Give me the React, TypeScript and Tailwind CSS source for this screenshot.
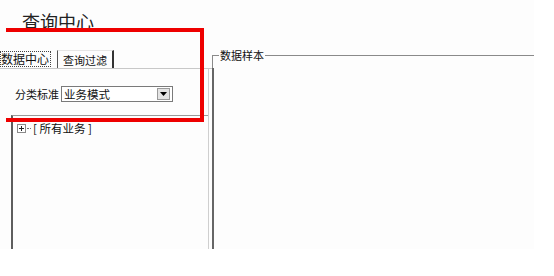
import React from "react";

const font = { fontFamily: '"Noto Sans CJK SC", "Noto Sans", sans-serif' };

function PlusBox() {
  return (
    <svg width="9" height="9" viewBox="0 0 9 9" className="shrink-0">
      <rect x="0.5" y="0.5" width="8" height="8" fill="#fff" stroke="#8a8a8a" />
      <path d="M2 4.5h5M4.5 2v5" stroke="#222" strokeWidth="1" />
    </svg>
  );
}

export default function App() {
  return (
    <div
      className="relative w-[554px] h-[276px] bg-white overflow-hidden text-[#111]"
      style={font}
    >
      <div className="w-[534px] h-[249px] bg-[#fdfdfd] flex flex-col">
        {/* Title */}
        <div className="h-[47px] pl-[22px] pt-[10px] shrink-0">
          <div className="text-[18px] leading-[22px] text-[#222]">查询中心</div>
        </div>

        {/* Body */}
        <div className="flex flex-1 min-h-0">
          {/* Left column */}
          <div className="w-[212px] flex flex-col shrink-0">
            {/* Tabs */}
            <div className="h-[22px] flex items-end border-b border-[#c8c8c8] shrink-0">
              <div className="w-[57px] h-[18px] flex items-center">
                <span className="text-[12px] leading-[14px] border border-dotted border-[#444] pr-[1px]">
                  数据中心
                </span>
              </div>
              <div className="h-[18px] flex items-center px-[5px] border-l border-[#555] border-r-2 border-r-[#333] border-t border-t-[#e5e5e5]">
                <span className="text-[11px] leading-[14px]">查询过滤</span>
              </div>
            </div>

            {/* Panel */}
            <div className="flex-1 flex flex-col border-r border-[#cfcfcf] mr-[3px]">
              <div className="flex items-center mt-[17px] h-[16px]">
                <span className="ml-[15px] w-[46px] text-[11px] leading-[14px]">分类标准</span>
                <div className="w-[112px] h-[16px] border border-[#7a7a7a] bg-white flex items-center">
                  <span className="flex-1 pl-[2px] text-[11.5px] leading-[14px]">业务模式</span>
                  <div className="w-[13px] h-[12px] mr-[2px] bg-[#e4e4e4] border border-[#9a9a9a] flex items-center justify-center">
                    <svg width="7" height="4" viewBox="0 0 7 4">
                      <path d="M0 0h7L3.5 4z" fill="#000" />
                    </svg>
                  </div>
                </div>
              </div>

              {/* Tree box */}
              <div className="ml-[11px] mt-[13px] flex-1 border-l-2 border-[#5e5e5e] border-t border-t-[#9a9a9a] bg-[#fdfdfd]">
                <div className="flex items-center pl-[4px] pt-[5px] gap-[1px]">
                  <PlusBox />
                  <span className="w-[4px] border-t border-dotted border-[#777]" />
                  <span className="text-[11.5px] leading-[14px] ml-[1px]">[ 所有业务 ]</span>
                </div>
              </div>
            </div>
          </div>

          {/* Right column: fieldset */}
          <div className="flex-1 flex flex-col pt-[8px]">
            <div className="relative flex-1 border-t border-l border-[#8a8a8a] flex flex-col">
              <span className="absolute -top-[8px] left-[6px] bg-[#fdfdfd] px-[1px] text-[11px] leading-[14px]">
                数据样本
              </span>
              <div className="mt-[12px] flex-1 -ml-[1px] border-l-2 border-[#666]" />
            </div>
          </div>
        </div>
      </div>

      {/* Red annotation rectangle */}
      <div className="absolute left-[6px] top-[28px] w-[198px] h-[94px] border-t-4 border-r-4 border-b-4 border-[#ee0000]" />
    </div>
  );
}
